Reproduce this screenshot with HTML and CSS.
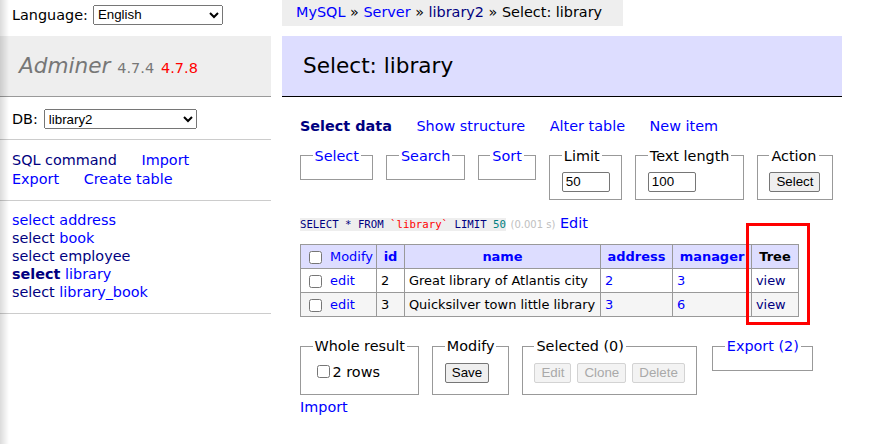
FILE: index.html
```html
<!DOCTYPE html>
<html lang="en">
<head>
<meta charset="utf-8">
<title>Select: library - Adminer</title>
<link rel="stylesheet" href="styles.css">
</head>
<body>
<div class="shade"></div>
<div class="page">
  <aside class="menu">
    <form class="lang">
      <label for="lang">Language:</label>
      <select id="lang" class="lang-select"><option>English</option></select>
    </form>
    <h1 class="logo"><a class="brand" href="#">Adminer</a> <span class="version">4.7.4</span> <a class="new-version" href="#">4.7.8</a></h1>
    <form class="dbs">
      <label for="db">DB:</label>
      <select id="db" class="db-select"><option>library2</option></select>
    </form>
    <p class="menu-links">
      <a class="visited" href="#">SQL command</a>
      <a href="#">Import</a>
      <a href="#">Export</a>
      <a href="#">Create table</a>
    </p>
    <ul class="tables">
      <li><a href="#">select</a> <a href="#">address</a></li>
      <li><a class="visited" href="#">select</a> <a href="#">book</a></li>
      <li><a class="visited" href="#">select</a> <a class="visited" href="#">employee</a></li>
      <li><a class="visited active" href="#">select</a> <a href="#">library</a></li>
      <li><a class="visited" href="#">select</a> <a href="#">library_book</a></li>
    </ul>
  </aside>

  <main class="content">
    <div class="breadcrumb"><a href="#">MySQL</a> » <a href="#">Server</a> » <a class="visited" href="#">library2</a> » Select: library</div>
    <h2 class="title">Select: library</h2>
    <div class="inner">
      <p class="links">
        <a class="visited active" href="#">Select data</a>
        <a href="#">Show structure</a>
        <a href="#">Alter table</a>
        <a href="#">New item</a>
      </p>

      <form class="options">
        <fieldset><legend><a href="#">Select</a></legend></fieldset>
        <fieldset><legend><a href="#">Search</a></legend></fieldset>
        <fieldset><legend><a href="#">Sort</a></legend></fieldset>
        <fieldset><legend>Limit</legend><input class="field" type="text" value="50"></fieldset>
        <fieldset><legend>Text length</legend><input class="field" type="text" value="100"></fieldset>
        <fieldset><legend>Action</legend><button class="btn" type="button">Select</button></fieldset>
      </form>

      <p class="query"><code><span class="kw">SELECT</span> <span class="kw">*</span> <span class="kw">FROM</span> <span class="bac">`library`</span> <span class="kw">LIMIT</span> <span class="sqlnum">50</span></code> <span class="time">(0.001 s)</span> <a href="#">Edit</a></p>

      <div class="table-wrap">
        <table class="data">
          <colgroup>
            <col class="c-mod"><col class="c-id"><col class="c-name"><col class="c-addr"><col class="c-man"><col class="c-tree">
          </colgroup>
          <thead>
            <tr>
              <th class="cb-cell"><input type="checkbox"><a href="#">Modify</a></th>
              <th><a class="sort" href="#">id</a></th>
              <th><a class="sort" href="#">name</a></th>
              <th><a class="sort" href="#">address</a></th>
              <th><a class="sort" href="#">manager</a></th>
              <th>Tree</th>
            </tr>
          </thead>
          <tbody>
            <tr>
              <td class="cb-cell"><input type="checkbox"><a href="#">edit</a></td>
              <td>2</td>
              <td>Great library of Atlantis city</td>
              <td><a href="#">2</a></td>
              <td><a href="#">3</a></td>
              <td><a class="visited" href="#">view</a></td>
            </tr>
            <tr>
              <td class="cb-cell"><input type="checkbox"><a href="#">edit</a></td>
              <td>3</td>
              <td>Quicksilver town little library</td>
              <td><a href="#">3</a></td>
              <td><a href="#">6</a></td>
              <td><a class="visited" href="#">view</a></td>
            </tr>
          </tbody>
        </table>
        <div class="flag"></div>
      </div>

      <div class="footer">
        <fieldset><legend>Whole result</legend><label class="whole"><input type="checkbox">2 rows</label></fieldset>
        <fieldset><legend>Modify</legend><div class="btns"><button class="btn" type="button">Save</button></div></fieldset>
        <fieldset><legend>Selected (0)</legend><div class="btns"><button class="btn" type="button" disabled>Edit</button><button class="btn" type="button" disabled>Clone</button><button class="btn" type="button" disabled>Delete</button></div></fieldset>
        <fieldset class="export"><legend><a href="#">Export (2)</a></legend></fieldset>
      </div>

      <p class="import"><a href="#">Import</a></p>
    </div>
  </main>
</div>
</body>
</html>
```

FILE: styles.css
```css
html, body {
  margin: 0;
}

body {
  font: 14.4px/18px "DejaVu Sans", Verdana, sans-serif;
  color: #000;
  background: #fff;
}

a {
  color: #00f;
  text-decoration: none;
}

a.visited {
  color: navy;
}

.active {
  font-weight: bold;
}

select, input, button {
  font: 13.33px "Liberation Sans", Arial, sans-serif;
}

.shade {
  position: fixed;
  left: 0;
  top: 0;
  bottom: 0;
  width: 9px;
  background: linear-gradient(to right, rgba(0, 0, 0, 0.14), rgba(0, 0, 0, 0));
  pointer-events: none;
  z-index: 5;
}

.page {
  display: flex;
  align-items: flex-start;
}

/* sidebar */
.menu {
  width: 271px;
  flex: none;
}

.lang {
  display: flex;
  align-items: center;
  gap: 5px;
  height: 29px;
  margin: 0 0 7px;
  padding-left: 12px;
}

.lang-select {
  width: 130px;
  height: 20px;
}

.logo {
  height: 26px;
  margin: 0;
  padding: 17px 19px;
  font-size: 21.6px;
  line-height: 26px;
  font-weight: normal;
  color: #777;
  background: #eee;
  border-bottom: 1px solid #999;
  white-space: nowrap;
}

.brand {
  color: #777;
  font-style: italic;
}

.version,
.new-version {
  font-size: 14.5px;
  line-height: 1;
}

.version {
  color: #777;
}

.new-version {
  color: red;
}

.dbs {
  display: flex;
  align-items: center;
  gap: 6px;
  margin: 0;
  padding: 12px 12px 10px;
  border-bottom: 1px solid #ccc;
}

.db-select {
  width: 153px;
  height: 20px;
}

.menu-links {
  margin: 0;
  padding: 11px 12px 12px;
  border-bottom: 1px solid #ccc;
  line-height: 18.5px;
}

.menu-links a {
  margin-right: 20px;
  white-space: nowrap;
}

.tables {
  list-style: none;
  margin: 0;
  padding: 10px 12px 12px;
  border-bottom: 1px solid #ccc;
  white-space: nowrap;
}

/* content */
.content {
  flex: 1;
  min-width: 0;
  margin-left: 11px;
  padding-right: 38px;
}

.breadcrumb {
  width: fit-content;
  height: 26px;
  line-height: 24px;
  padding: 0 21px 0 14px;
  margin-bottom: 10px;
  background: #eee;
  white-space: nowrap;
}

.title {
  margin: 0 0 20px;
  padding: 17px 21px;
  font-size: 21.6px;
  line-height: 26px;
  font-weight: normal;
  background: #ddf;
  border-bottom: 1px solid #000;
}

.inner {
  padding-left: 18px;
}

.links {
  margin: 0;
}

.links a {
  margin-right: 20px;
  white-space: nowrap;
}

fieldset {
  margin: 0;
  padding: 7.2px 11.5px;
  border: 1px solid #999;
  min-width: 0;
}

legend {
  padding: 0 2px;
}

.options {
  display: flex;
  align-items: flex-start;
  gap: 13px;
  margin-top: 11.5px;
}

.field {
  box-sizing: border-box;
  width: 48px;
  height: 20px;
  padding: 1px 3px;
  border: 1px solid #767676;
  border-radius: 2px;
  display: block;
}

.btn {
  box-sizing: border-box;
  height: 20px;
  padding: 0 6px;
  border: 1px solid #767676;
  border-radius: 2px;
  background: #efefef;
  color: #000;
  display: block;
}

.btn:disabled {
  background: #f3f3f3;
  border-color: #d3d3d3;
  color: #a9a9a9;
}

.query {
  margin: 14px 0 0;
}

code {
  font: 10.7px "DejaVu Sans Mono", monospace;
  background: #eee;
}

.kw {
  color: navy;
}

.bac {
  color: red;
}

.sqlnum {
  color: #008080;
}

.time {
  color: silver;
  font-size: 10px;
}

.table-wrap {
  position: relative;
  width: fit-content;
  margin-top: 10.5px;
}

.data {
  border-collapse: collapse;
  table-layout: fixed;
  width: 498px;
  font-size: 12.96px;
  line-height: 17px;
}

.c-mod { width: 76px; }
.c-id { width: 28px; }
.c-name { width: 196px; }
.c-addr { width: 72px; }
.c-man { width: 79px; }
.c-tree { width: 47px; }

.data th, .data td {
  border: 1px solid #999;
  padding: 3px 3.9px;
  white-space: nowrap;
  text-align: left;
}

.data thead th {
  background: #ddf;
  text-align: center;
  padding: 3px 4px;
}

.data thead th.cb-cell, .data td.cb-cell {
  text-align: left;
  padding-left: 8px;
  font-weight: normal;
}

.cb-cell input {
  margin: 0 8px 0 0;
  vertical-align: middle;
}

.data tbody tr:nth-child(2n) td {
  background: #f5f5f5;
}

.flag {
  position: absolute;
  left: 446px;
  top: -21px;
  width: 64px;
  height: 102px;
  box-sizing: border-box;
  border: 3px solid #f00;
}

.footer {
  display: flex;
  align-items: flex-start;
  gap: 13px;
  margin-top: 20px;
}

.whole {
  display: flex;
  align-items: center;
  height: 18px;
  margin-bottom: 6px;
}

.whole input {
  margin: 0 3px 0 4px;
}

.btns {
  display: flex;
  gap: 6px;
  height: 24px;
  align-items: flex-start;
}

.export {
  margin-left: 2px;
}

.import {
  margin: 3px 0 0;
}
```
